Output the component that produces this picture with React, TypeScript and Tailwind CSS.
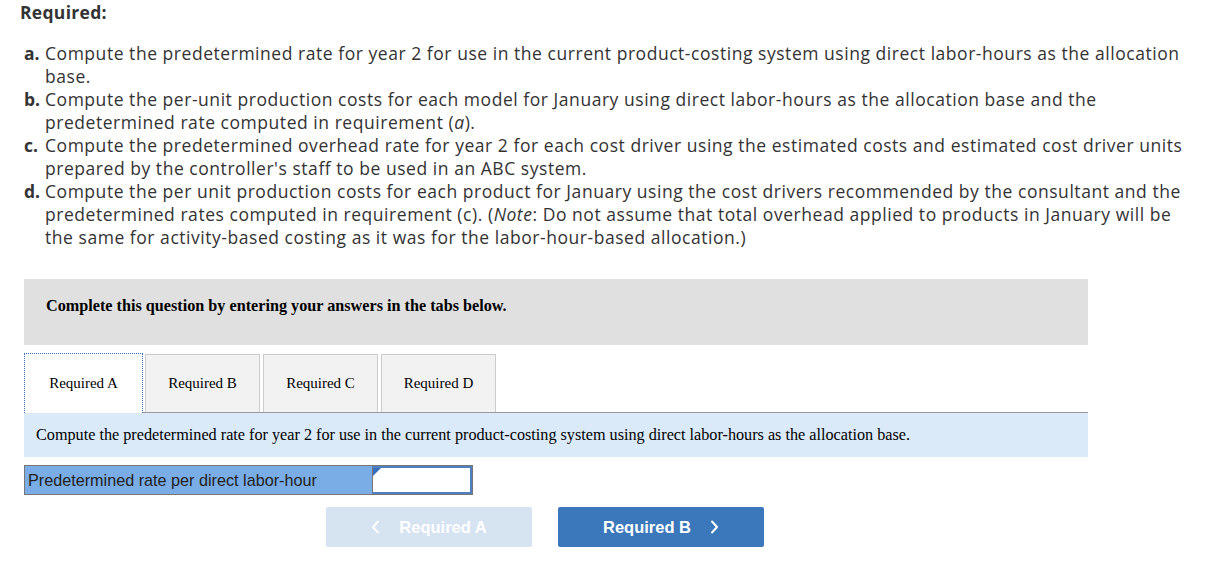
import React from "react";

const Chev = ({ dir }: { dir: "l" | "r" }) => (
  <svg width="9" height="14" viewBox="0 0 9 14" fill="none" stroke="currentColor" strokeWidth="2" strokeLinecap="round" strokeLinejoin="round">
    {dir === "l" ? <path d="M7 1.5 L2 7 L7 12.5" /> : <path d="M2 1.5 L7 7 L2 12.5" />}
  </svg>
);

export default function App() {
  const sans = { fontFamily: '"Open Sans", "Liberation Sans", sans-serif' };
  const serif = { fontFamily: '"Liberation Serif", serif' };
  const items: [string, React.ReactNode][] = [
    ["a.", <>Compute the predetermined rate for year 2 for use in the current product-costing system using direct labor-hours as the allocation base.</>],
    ["b.", <>Compute the per-unit production costs for each model for January using direct labor-hours as the allocation base and the predetermined rate computed in requirement (<i>a</i>).</>],
    ["c.", <>Compute the predetermined overhead rate for year 2 for each cost driver using the estimated costs and estimated cost driver units prepared by the controller's staff to be used in an ABC system.</>],
    ["d.", <>Compute the per unit production costs for each product for January using the cost drivers recommended by the consultant and the predetermined rates computed in requirement (c). (<i>Note</i>: Do not assume that total overhead applied to products in January will be the same for activity-based costing as it was for the labor-hour-based allocation.)</>],
  ];
  return (
    <div className="w-[1209px] h-[569px] bg-white text-[#333]">
      <div className="pl-[20px] pt-[1px]" style={sans}>
        <div className="text-[17.5px] font-bold leading-[23px] tracking-[0.3px]">Required:</div>
      </div>
      <div className="pl-[24px] pr-[14px] mt-[18px]" style={sans}>
        {items.map(([l, t]) => (
          <div key={l} className="flex text-[17.5px] leading-[23px] tracking-[0.54px]">
            <span className="w-[21px] shrink-0 font-bold tracking-normal">{l}</span>
            <span>{t}</span>
          </div>
        ))}
      </div>
      <div className="ml-[24px] w-[1064px] mt-[30px]">
        <div className="bg-[#e0e0e0] h-[66px] pl-[22px] pt-[15px]" style={serif}>
          <div className="text-[16.2px] font-bold text-black">Complete this question by entering your answers in the tabs below.</div>
        </div>
        <div className="flex mt-[9px] h-[59px] border-b border-[#999] items-end" style={serif}>
          <div className="w-[119px] bg-white border border-dotted border-[#3a6fbf] border-b-0 flex items-center justify-center text-[15px] text-black mb-[-1px] h-[60px]">Required A</div>
          <div className="ml-[2px] w-[115px] h-[58px] bg-[#f2f2f2] border border-[#ccc] border-b-0 flex items-center justify-center text-[15px] text-black">Required B</div>
          <div className="ml-[3px] w-[115px] h-[58px] bg-[#f2f2f2] border border-[#ccc] border-b-0 flex items-center justify-center text-[15px] text-black">Required C</div>
          <div className="ml-[3px] w-[115px] h-[58px] bg-[#f2f2f2] border border-[#ccc] border-b-0 flex items-center justify-center text-[15px] text-black">Required D</div>
        </div>
        <div className="bg-[#dbeaf8] h-[44px] pl-[12px] flex items-center text-[16.2px] text-black" style={serif}>
          Compute the predetermined rate for year 2 for use in the current product-costing system using direct labor-hours as the allocation base.
        </div>
        <div className="flex mt-[8px] h-[30px] border border-[#777] w-[449px]">
          <div className="w-[347px] bg-[#7aade6] flex items-center pl-[3px] text-[16.2px] text-[#222]" style={{ fontFamily: '"Liberation Sans", sans-serif' }}>
            Predetermined rate per direct labor-hour
          </div>
          <div className="relative flex-1 bg-white border-2 border-[#4f7fc0] border-l border-l-[#777]">
            <div className="absolute left-0 top-0 w-0 h-0 border-t-[8px] border-t-[#3a6fbf] border-r-[8px] border-r-transparent" />
          </div>
        </div>
        <div className="flex mt-[12px] ml-[302px] gap-[26px]" style={{ fontFamily: '"Liberation Sans", sans-serif' }}>
          <div className="w-[206px] h-[40px] bg-[#d6e3f1] rounded-[2px] flex items-center justify-center text-white font-bold text-[16.5px]">
            <span className="mr-[19px] flex"><Chev dir="l" /></span>Required A
          </div>
          <div className="w-[206px] h-[40px] bg-[#3a77bb] rounded-[2px] flex items-center justify-center text-white font-bold text-[16.5px]">
            Required B<span className="ml-[19px] flex"><Chev dir="r" /></span>
          </div>
        </div>
      </div>
    </div>
  );
}
